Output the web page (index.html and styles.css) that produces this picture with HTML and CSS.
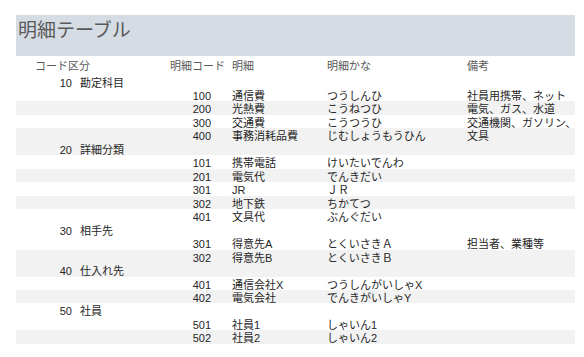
FILE: index.html
```html
<!DOCTYPE html>
<html lang="ja">
<head>
<meta charset="utf-8">
<link rel="stylesheet" href="styles.css">
</head>
<body>
<div class="report">
  <div class="title-band"><h1 class="title">明細テーブル</h1></div>
  <div class="row head">
    <span class="h-group">コード区分</span>
    <span class="h-code">明細コード</span>
    <span class="c-name">明細</span>
    <span class="c-kana">明細かな</span>
    <span class="c-note">備考</span>
  </div>

  <div class="row group"><span class="g-code">10</span><span class="g-name">勘定科目</span></div>
  <div class="row"><span class="d-code">100</span><span class="c-name">通信費</span><span class="c-kana">つうしんひ</span><span class="c-note">社員用携帯、ネット</span></div>
  <div class="row alt"><span class="d-code">200</span><span class="c-name">光熱費</span><span class="c-kana">こうねつひ</span><span class="c-note">電気、ガス、水道</span></div>
  <div class="row"><span class="d-code">300</span><span class="c-name">交通費</span><span class="c-kana">こうつうひ</span><span class="c-note">交通機関、ガソリン、</span></div>
  <div class="row alt"><span class="d-code">400</span><span class="c-name">事務消耗品費</span><span class="c-kana">じむしょうもうひん</span><span class="c-note">文具</span></div>

  <div class="row group alt"><span class="g-code">20</span><span class="g-name">詳細分類</span></div>
  <div class="row"><span class="d-code">101</span><span class="c-name">携帯電話</span><span class="c-kana">けいたいでんわ</span><span class="c-note"></span></div>
  <div class="row alt"><span class="d-code">201</span><span class="c-name">電気代</span><span class="c-kana">でんきだい</span><span class="c-note"></span></div>
  <div class="row"><span class="d-code">301</span><span class="c-name">JR</span><span class="c-kana">ＪＲ</span><span class="c-note"></span></div>
  <div class="row alt"><span class="d-code">302</span><span class="c-name">地下鉄</span><span class="c-kana">ちかてつ</span><span class="c-note"></span></div>
  <div class="row"><span class="d-code">401</span><span class="c-name">文具代</span><span class="c-kana">ぶんぐだい</span><span class="c-note"></span></div>

  <div class="row group"><span class="g-code">30</span><span class="g-name">相手先</span></div>
  <div class="row"><span class="d-code">301</span><span class="c-name">得意先A</span><span class="c-kana">とくいさきＡ</span><span class="c-note">担当者、業種等</span></div>
  <div class="row alt"><span class="d-code">302</span><span class="c-name">得意先B</span><span class="c-kana">とくいさきＢ</span><span class="c-note"></span></div>

  <div class="row group alt"><span class="g-code">40</span><span class="g-name">仕入れ先</span></div>
  <div class="row"><span class="d-code">401</span><span class="c-name">通信会社X</span><span class="c-kana">つうしんがいしゃX</span><span class="c-note"></span></div>
  <div class="row alt"><span class="d-code">402</span><span class="c-name">電気会社</span><span class="c-kana">でんきがいしゃY</span><span class="c-note"></span></div>

  <div class="row group"><span class="g-code">50</span><span class="g-name">社員</span></div>
  <div class="row"><span class="d-code">501</span><span class="c-name">社員1</span><span class="c-kana">しゃいん1</span><span class="c-note"></span></div>
  <div class="row alt"><span class="d-code">502</span><span class="c-name">社員2</span><span class="c-kana">しゃいん2</span><span class="c-note"></span></div>
</div>
</body>
</html>
```

FILE: styles.css
```css
* { box-sizing: border-box; }
html, body { margin: 0; padding: 0; background: #ffffff; }
body {
  padding: 15px 0 0 16px;
  font-family: "Liberation Sans", "Noto Sans CJK JP", sans-serif;
  font-size: 11px;
  color: #262626;
}
.report { width: 559px; }
.title-band {
  background: #d6dce4;
  height: 41px;
  padding: 4px 0 0 2px;
}
.title {
  margin: 0;
  font-weight: normal;
  font-size: 19px;
  line-height: 24px;
  color: #595959;
}
.row {
  display: grid;
  grid-template-columns: 56px 8px 131px 21px 95px 140px 108px;
  grid-template-rows: 100%;
  height: 13.475px;
  line-height: 13px;
  white-space: nowrap;
}
.row > span { grid-row: 1; padding-top: 2px; }
.row.alt { background: #f2f2f2; }
.row.head {
  height: 18.5px;
  color: #595959;
}
.row.head > span { padding-top: 4px; }
.h-group { grid-column: 1 / 3; padding-left: 19px; }
.h-code { grid-column: 3 / 5; text-align: right; padding-right: 7px; }
.g-code { grid-column: 1; text-align: right; }
.g-name { grid-column: 3 / 6; }
.d-code { grid-column: 3; text-align: right; }
.c-name { grid-column: 5; }
.c-kana { grid-column: 6; }
.c-note { grid-column: 7; }
```
